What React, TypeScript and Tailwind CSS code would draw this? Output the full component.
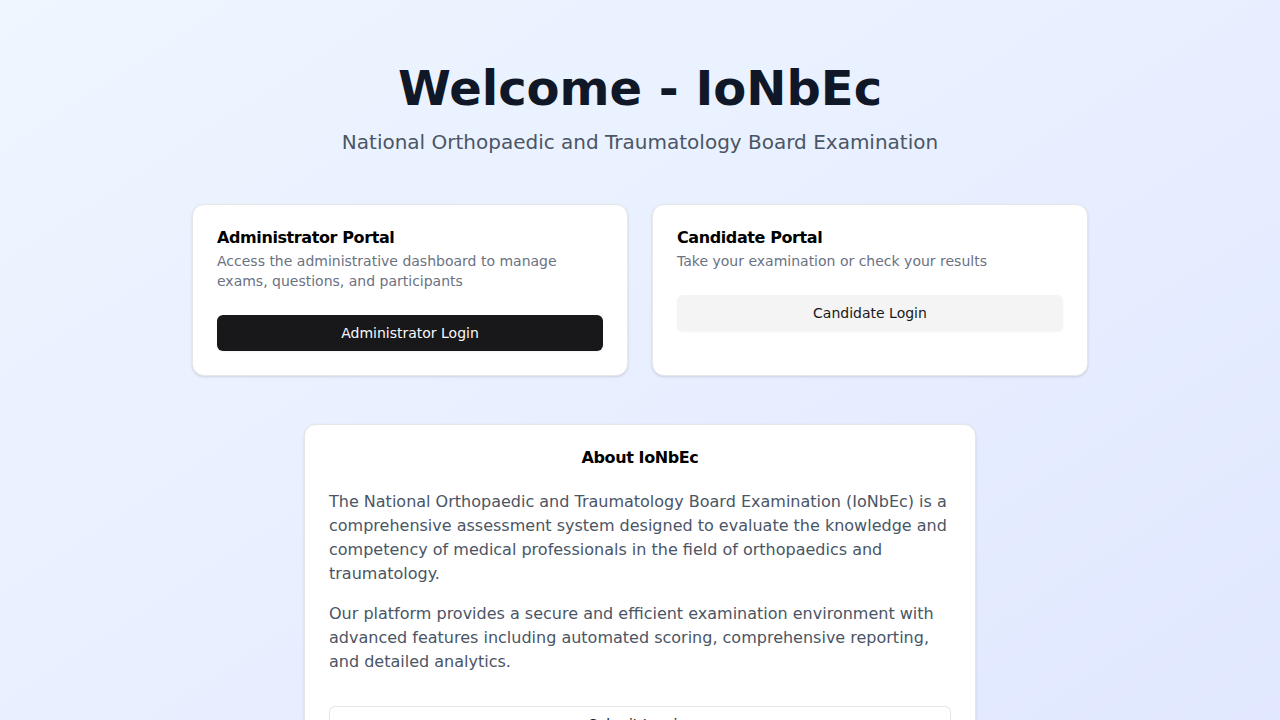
export default function App() {
  return (
    <div
      className="min-h-screen bg-gradient-to-br from-blue-50 to-indigo-100 px-4 pt-16 pb-16"
      style={{ fontFamily: '"DejaVu Sans", sans-serif' }}
    >
      <div className="mx-auto max-w-4xl">
        <div className="text-center">
          <h1 className="mb-4 text-5xl leading-none font-bold text-gray-900">Welcome - IoNbEc</h1>
          <p className="mb-12 text-xl leading-7 text-gray-600">
            National Orthopaedic and Traumatology Board Examination
          </p>
        </div>

        <div className="grid grid-cols-2 gap-6">
          <div className="flex flex-col gap-6 rounded-xl border border-gray-200 bg-white px-6 py-6 shadow-sm">
            <div className="flex flex-col gap-[5px]">
              <div className="text-base leading-[17px] font-semibold tracking-tight text-black">Administrator Portal</div>
              <div className="text-sm leading-5 text-gray-500">
                Access the administrative dashboard to manage exams, questions, and participants
              </div>
            </div>
            <button className="h-9 w-full rounded-md bg-zinc-900 text-sm text-zinc-50 shadow-xs">
              Administrator Login
            </button>
          </div>
          <div className="flex flex-col gap-6 rounded-xl border border-gray-200 bg-white px-6 py-6 shadow-sm">
            <div className="flex flex-col gap-[5px]">
              <div className="text-base leading-[17px] font-semibold tracking-tight text-black">Candidate Portal</div>
              <div className="text-sm leading-5 text-gray-500">Take your examination or check your results</div>
            </div>
            <button className="h-9 w-full rounded-md bg-zinc-100 text-sm text-zinc-900 shadow-xs">
              Candidate Login
            </button>
          </div>
        </div>

        <div className="mx-auto mt-12 flex max-w-2xl flex-col gap-6 rounded-xl border border-gray-200 bg-white px-6 py-6 shadow-sm">
          <div className="text-center text-base leading-[17px] font-semibold tracking-tight text-black">About IoNbEc</div>
          <div className="flex flex-col gap-4 text-base leading-6 text-gray-600">
            <p>
              The National Orthopaedic and Traumatology Board Examination (IoNbEc) is a comprehensive assessment
              system designed to evaluate the knowledge and competency of medical professionals in the field of
              orthopaedics and traumatology.
            </p>
            <p>
              Our platform provides a secure and efficient examination environment with advanced features including
              automated scoring, comprehensive reporting, and detailed analytics.
            </p>
          </div>
          <button className="mt-2 h-9 w-full rounded-md border border-gray-200 bg-white text-sm text-zinc-900 shadow-xs">
            Submit Inquiry
          </button>
        </div>
      </div>
    </div>
  );
}
